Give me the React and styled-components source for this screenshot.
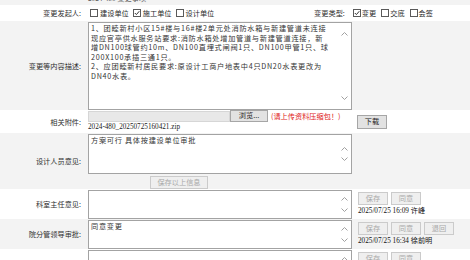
import React from 'react';
import styled, { createGlobalStyle } from 'styled-components';

const GlobalStyle = createGlobalStyle`
  html, body {
    margin: 0;
    padding: 0;
    background: #fff;
  }
  body {
    font-family: "Noto Sans CJK SC", "Liberation Sans", sans-serif;
    font-size: 7.2px;
    color: #2a2a2a;
  }
`;

const Sheet = styled.div`
  width: 470px;
  height: 260px;
  overflow: hidden;
`;

const Form = styled.div`
  display: flex;
  flex-direction: column;
  margin-top: -9px;
`;

const Row = styled.div`
  display: flex;
  flex: none;
  height: ${(p) => p.$h}px;
  background: ${(p) => (p.$shade ? '#f3f3f3' : '#fff')};
`;

const Label = styled.div`
  flex: none;
  width: 81px;
  padding-right: 7px;
  display: flex;
  align-items: center;
  justify-content: flex-end;
  white-space: nowrap;
  color: #2f2f2f;
`;

const Caption = styled.div`
  flex: 1;
  display: flex;
  align-items: flex-end;
  padding-bottom: 1px;
  font-family: "Liberation Serif", "Noto Sans CJK SC", serif;
  font-size: 7.2px;
  line-height: 9px;
  color: #555;
`;

const Main = styled.div`
  flex: none;
  width: 269px;
  display: flex;
  flex-direction: column;
  padding-top: ${(p) => p.$top || 0}px;
`;

const Side = styled.div`
  flex: 1;
  display: flex;
  flex-direction: column;
  align-items: flex-start;
  justify-content: ${(p) => (p.$center ? 'center' : 'flex-start')};
  padding-top: ${(p) => p.$top || 0}px;
`;

const ChoiceCell = styled.div`
  flex: 1;
  display: flex;
  align-items: center;
  justify-content: space-between;
  padding: 0 32px 0 2px;
`;

const ChoiceGroup = styled.div`
  display: flex;
  align-items: center;
`;

const GroupLabel = styled.span`
  margin-right: 8px;
  color: #2f2f2f;
`;

const Choice = styled.label`
  display: flex;
  align-items: center;
  margin-right: ${(p) => (p.$tight ? 5 : 4)}px;
  white-space: nowrap;
`;

const Box = styled.span`
  width: 6px;
  height: 6px;
  border: 1px solid #5a5a5a;
  background: #fff;
  margin-right: ${(p) => (p.$tight ? 1 : 2)}px;
  display: flex;
  align-items: center;
  justify-content: center;
`;

const Memo = styled.div`
  width: 262px;
  height: ${(p) => p.$h}px;
  border: 1px solid #a3a3a3;
  background: #fff;
  display: flex;
  overflow: hidden;
`;

const MemoText = styled.div`
  flex: 1;
  min-width: 0;
  padding: 1px 2px;
  font-size: 7.2px;
  letter-spacing: 0.72px;
  line-height: 9.6px;
  color: #333;
`;

const MemoLine = styled.div`
  white-space: nowrap;
`;

const ScrollBar = styled.div`
  flex: none;
  width: 13px;
  display: flex;
  flex-direction: column;
  align-items: center;
  justify-content: space-between;
  padding: ${(p) => p.$pad}px 0;
`;

const FileRow = styled.div`
  display: flex;
  align-items: center;
  height: 12px;
`;

const FileField = styled.div`
  width: 140px;
  height: 9px;
  background: #e8e8e8;
  border: 1px solid #d6d6d6;
`;

const Button = styled.button`
  flex: none;
  box-sizing: border-box;
  width: ${(p) => p.$w || 30}px;
  height: ${(p) => p.$h || 13}px;
  padding: 0;
  margin: 0;
  font-family: "Noto Sans CJK SC", sans-serif;
  font-size: 7.2px;
  line-height: 1;
  border: 1px solid ${(p) => (p.disabled ? '#cbcbcb' : '#a6a6a6')};
  background: ${(p) => (p.disabled ? '#efefef' : '#e2e2e2')};
  color: ${(p) => (p.disabled ? '#a9a9a9' : '#222')};
`;

const Hint = styled.span`
  margin-left: 3px;
  color: #e01b1b;
  white-space: nowrap;
`;

const FileName = styled.div`
  margin-top: 1px;
  font-family: "Liberation Serif", serif;
  font-size: 7.2px;
  line-height: 9px;
  color: #222;
`;

const SaveBar = styled.div`
  display: flex;
  padding: 2px 0 0 62px;
`;

const Actions = styled.div`
  display: flex;
  gap: 3px;
  padding-left: 1px;
`;

const Stamp = styled.div`
  margin-top: 2px;
  padding-left: 1px;
  font-family: "Liberation Serif", "Noto Sans CJK SC", serif;
  font-size: 7.2px;
  line-height: 9px;
  color: #111;
  white-space: nowrap;
`;

const Chevron = ({ down }) => (
  <svg width="7" height="4" viewBox="0 0 7 4">
    <polyline
      points={down ? '0.5,0.5 3.5,3.5 6.5,0.5' : '0.5,3.5 3.5,0.5 6.5,3.5'}
      fill="none"
      stroke="#a0a0a0"
      strokeWidth="1"
    />
  </svg>
);

const Check = () => (
  <svg width="6" height="6" viewBox="0 0 6 6">
    <polyline points="0.8,3 2.4,4.6 5.3,1.2" fill="none" stroke="#333" strokeWidth="1" />
  </svg>
);

const Option = ({ text, checked, tight }) => (
  <Choice $tight={tight}>
    <Box $tight={tight}>{checked && <Check />}</Box>
    {text}
  </Choice>
);

const TextBox = ({ h, pad = 7, lines = [] }) => (
  <Memo $h={h}>
    <MemoText>
      {lines.map((l, i) => (
        <MemoLine key={i}>{l}</MemoLine>
      ))}
    </MemoText>
    <ScrollBar $pad={pad}>
      <Chevron />
      <Chevron down />
    </ScrollBar>
  </Memo>
);

const content = [
  '1、团睦新村小区15#楼与16#楼2单元处消防水箱与新建管道未连接',
  '现应官亭供水服务站要求:消防水箱处增加管道与新建管道连接，新',
  '增DN100球管约10m、DN100直埋式闸阀1只、DN100甲管1只、球',
  '200X100承插三通1只。',
  '2、应团睦新村居民要求:原设计工商户地表中4只DN20水表更改为',
  'DN40水表。',
];

const approvals = [
  { label: '科室主任意见:', lines: [], buttons: ['保存', '同意'], stamp: '2025/07/25 16:09 ', who: '许峰' },
  { label: '院分管领导审批:', lines: ['同意变更'], buttons: ['保存', '同意', '退回'], stamp: '2025/07/25 16:34 ', who: '徐前明', shade: true },
  { label: '院长审批意见:', lines: [], buttons: ['保存', '同意'] },
];

export default function App() {
  return (
    <Sheet>
      <GlobalStyle />
      <Form>
        <Row $h={14} $shade>
          <Label />
          <Caption>2024-480 变更事项</Caption>
        </Row>

        <Row $h={16}>
          <Label>变更发起人:</Label>
          <ChoiceCell>
            <ChoiceGroup>
              <Option text="建设单位" />
              <Option text="施工单位" checked />
              <Option text="设计单位" />
            </ChoiceGroup>
            <ChoiceGroup>
              <GroupLabel>变更类型:</GroupLabel>
              <Option text="变更" checked tight />
              <Option text="交底" tight />
              <Option text="会签" tight />
            </ChoiceGroup>
          </ChoiceCell>
        </Row>

        <Row $h={89} $shade>
          <Label>变更等内容描述:</Label>
          <Main $top={1}>
            <TextBox h={86} pad={9} lines={content} />
          </Main>
          <Side />
        </Row>

        <Row $h={23}>
          <Label>相关附件:</Label>
          <Main $top={0}>
            <FileRow>
              <FileField />
              <Button $w={38} $h={12}>浏览...</Button>
              <Hint>(请上传资料压缩包！)</Hint>
            </FileRow>
            <FileName>2024-480_20250725160421.zip</FileName>
          </Main>
          <Side $center>
            <Button $h={14}>下载</Button>
          </Side>
        </Row>

        <Row $h={56} $shade>
          <Label>设计人员意见:</Label>
          <Main $top={1}>
            <TextBox h={40} pad={12} lines={['方案可行 具体按建设单位审批']} />
            <SaveBar>
              <Button $w={58} disabled>保存以上信息</Button>
            </SaveBar>
          </Main>
          <Side />
        </Row>

        {approvals.map((a) => (
          <Row key={a.label} $h={30} $shade={a.shade}>
            <Label>{a.label}</Label>
            <Main $top={1}>
              <TextBox h={27} pad={6} lines={a.lines} />
            </Main>
            <Side $top={3}>
              <Actions>
                {a.buttons.map((b) => (
                  <Button key={b} disabled>{b}</Button>
                ))}
              </Actions>
              {a.stamp && (
                <Stamp>
                  {a.stamp}
                  {a.who}
                </Stamp>
              )}
            </Side>
          </Row>
        ))}
      </Form>
    </Sheet>
  );
}
